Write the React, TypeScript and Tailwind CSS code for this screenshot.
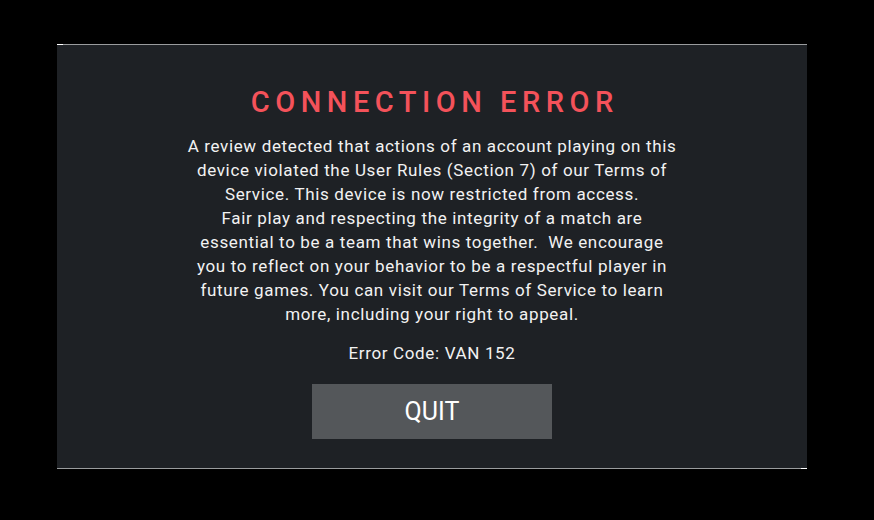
import React from "react";

export default function App() {
  const lines1 = [
    "A review detected that actions of an account playing on this",
    "device violated the User Rules (Section 7) of our Terms of",
    "Service. This device is now restricted from access.",
    "Fair play and respecting the integrity of a match are",
    "essential to be a team that wins together.\u00a0 We encourage",
    "you to reflect on your behavior to be a respectful player in",
    "future games. You can visit our Terms of Service to learn",
    "more, including your right to appeal.",
  ];
  return (
    <div
      className="w-[874px] h-[520px] bg-black pt-[44px] pl-[57px]"
      style={{ fontFamily: "Roboto, 'Liberation Sans', sans-serif" }}
    >
      <div className="relative w-[750px] h-[425px] bg-[#1e2125] border-t border-b border-[#9a9c9e] flex flex-col items-center">
        <div className="absolute -top-px left-0 w-[6px] h-px bg-white" />
        <div className="absolute -bottom-px right-0 w-[6px] h-px bg-white" />
        <h1 className="mt-[40px] text-[29px] leading-[34px] tracking-[0.19em] pl-[0.19em] text-[#f4525a] font-medium">
          CONNECTION ERROR
        </h1>
        <p className="mt-[15px] text-[17px] leading-[24px] tracking-[0.65px] text-[#f2f2f2] text-center">
          {lines1.map((l, i) => (
            <React.Fragment key={i}>
              {l}
              {i < lines1.length - 1 && <br />}
            </React.Fragment>
          ))}
        </p>
        <p className="mt-[15px] text-[17px] leading-[24px] tracking-[0.65px] text-[#f2f2f2]">
          Error Code: VAN 152
        </p>
        <button className="mt-[19px] w-[240px] h-[55px] bg-[#54575a] text-white text-[25px]">
          QUIT
        </button>
      </div>
    </div>
  );
}
